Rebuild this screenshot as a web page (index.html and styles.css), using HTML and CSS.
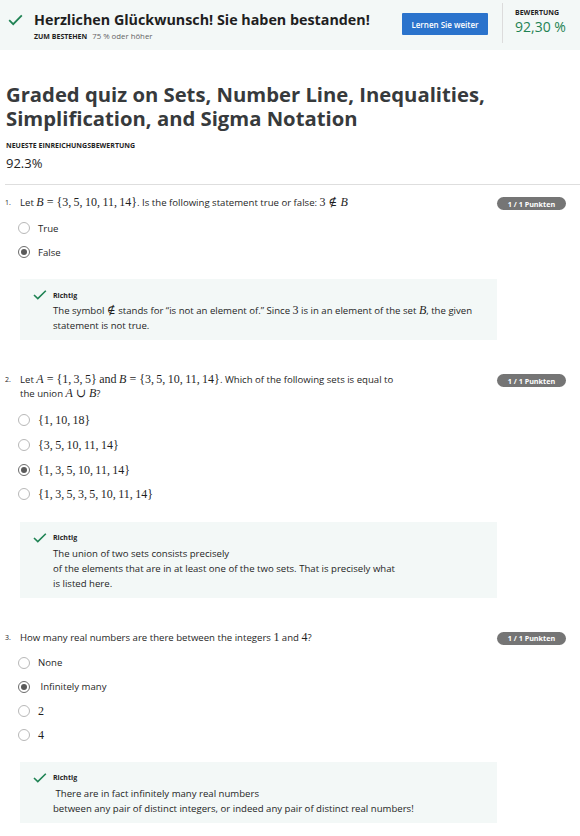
FILE: index.html
```html
<!DOCTYPE html>
<html lang="de">
<head>
<meta charset="utf-8">
<title>Graded quiz</title>
<link rel="stylesheet" href="styles.css">
</head>
<body>
<header class="banner">
  <div class="banner-left">
    <svg class="banner-check" width="15" height="12" viewBox="0 0 15 12"><path d="M1.2 6.2 L5.2 10.2 L13.8 1.4" fill="none" stroke="#1f8354" stroke-width="1.8"/></svg>
    <div class="banner-text">
      <div class="banner-title">Herzlichen Glückwunsch! Sie haben bestanden!</div>
      <div class="banner-sub"><span class="cap">ZUM BESTEHEN</span><span class="sub-val">75 % oder höher</span></div>
    </div>
  </div>
  <button class="btn">Lernen Sie weiter</button>
  <div class="banner-divider"></div>
  <div class="banner-grade">
    <div class="cap">BEWERTUNG</div>
    <div class="grade-val">92,30 %</div>
  </div>
</header>

<main class="main">
  <h1 class="title">Graded quiz on Sets, Number Line, Inequalities, Simplification, and Sigma Notation</h1>
  <div class="cap latest-label">NEUESTE EINREICHUNGSBEWERTUNG</div>
  <div class="latest-val">92.3%</div>
  <hr class="rule">

  <section class="q">
    <div class="q-num">1.</div>
    <div class="q-body">
      <div class="q-text">Let <span class="m"><i>B</i> = {3,&#8201;5,&#8201;10,&#8201;11,&#8201;14}</span>. Is the following statement true or false: <span class="m">3 ∉ <i>B</i></span></div>
      <ul class="opts">
        <li class="opt"><span class="radio"></span><span>True</span></li>
        <li class="opt"><span class="radio on"></span><span>False</span></li>
      </ul>
      <div class="fb">
        <div class="fb-head"><svg class="fb-check" width="14" height="10" viewBox="0 0 14 10"><path d="M1 5 L4.8 8.6 L12.8 0.8" fill="none" stroke="#1f8354" stroke-width="1.6"/></svg><span class="fb-label">Richtig</span></div>
        <div class="fb-text">The symbol <span class="m">∉</span> stands for “is not an element of.” Since <span class="m">3</span> is in an element of the set <span class="m"><i>B</i></span>, the given statement is not true.</div>
      </div>
    </div>
    <div class="badge">1 / 1 Punkten</div>
  </section>

  <section class="q">
    <div class="q-num">2.</div>
    <div class="q-body">
      <div class="q-text">Let <span class="m"><i>A</i> = {1,&#8201;3,&#8201;5}</span> <span class="m">and</span> <span class="m"><i>B</i> = {3,&#8201;5,&#8201;10,&#8201;11,&#8201;14}</span>. Which of the following sets is equal to the union <span class="m"><i>A</i> ∪ <i>B</i></span>?</div>
      <ul class="opts opts-math">
        <li class="opt"><span class="radio"></span><span class="m">{1,&#8201;10,&#8201;18}</span></li>
        <li class="opt"><span class="radio"></span><span class="m">{3,&#8201;5,&#8201;10,&#8201;11,&#8201;14}</span></li>
        <li class="opt"><span class="radio on"></span><span class="m">{1,&#8201;3,&#8201;5,&#8201;10,&#8201;11,&#8201;14}</span></li>
        <li class="opt"><span class="radio"></span><span class="m">{1,&#8201;3,&#8201;5,&#8201;3,&#8201;5,&#8201;10,&#8201;11,&#8201;14}</span></li>
      </ul>
      <div class="fb">
        <div class="fb-head"><svg class="fb-check" width="14" height="10" viewBox="0 0 14 10"><path d="M1 5 L4.8 8.6 L12.8 0.8" fill="none" stroke="#1f8354" stroke-width="1.6"/></svg><span class="fb-label">Richtig</span></div>
        <div class="fb-text">The union of two sets consists precisely<br>of the elements that are in at least one of the two sets. That is precisely what<br>is listed here.</div>
      </div>
    </div>
    <div class="badge">1 / 1 Punkten</div>
  </section>

  <section class="q">
    <div class="q-num">3.</div>
    <div class="q-body">
      <div class="q-text">How many real numbers are there between the integers <span class="m">1</span> and <span class="m">4</span>?</div>
      <ul class="opts">
        <li class="opt"><span class="radio"></span><span>None</span></li>
        <li class="opt"><span class="radio on"></span><span>&nbsp;Infinitely many</span></li>
        <li class="opt"><span class="radio"></span><span class="m">2</span></li>
        <li class="opt"><span class="radio"></span><span class="m">4</span></li>
      </ul>
      <div class="fb">
        <div class="fb-head"><svg class="fb-check" width="14" height="10" viewBox="0 0 14 10"><path d="M1 5 L4.8 8.6 L12.8 0.8" fill="none" stroke="#1f8354" stroke-width="1.6"/></svg><span class="fb-label">Richtig</span></div>
        <div class="fb-text">&nbsp;There are in fact infinitely many real numbers<br>between any pair of distinct integers, or indeed any pair of distinct real numbers!</div>
      </div>
    </div>
    <div class="badge">1 / 1 Punkten</div>
  </section>
</main>
</body>
</html>
```

FILE: styles.css
```css
* { box-sizing: border-box; }
html, body { margin: 0; padding: 0; }
body {
  font-family: "Open Sans", "Noto Sans", sans-serif;
  color: #1f1f1f;
  background: #ffffff;
  width: 580px;
}

.cap {
  font-size: 7px;
  font-weight: 700;
  color: #1f1f1f;
  text-transform: uppercase;
}

/* banner */
.banner {
  height: 50px;
  background: #f3f8f7;
  display: flex;
  align-items: flex-start;
}
.banner-left {
  display: flex;
  align-items: flex-start;
  padding: 13px 0 0 8px;
  width: 402px;
  flex: none;
}
.banner-check { margin-top: 1px; flex: none; }
.banner-text { margin-left: 11px; }
.banner-title {
  font-size: 14.3px;
  font-weight: 700;
  line-height: 14px;
  color: #1f1f1f;
  white-space: nowrap;
}
.banner-sub {
  margin-top: 5px;
  line-height: 9px;
  display: flex;
  gap: 5px;
  align-items: baseline;
}
.sub-val { font-size: 7.8px; color: #636363; }

.btn {
  margin-top: 13px;
  width: 86px;
  height: 22px;
  border: 0;
  border-radius: 1px;
  background: #2a73cc;
  color: #ffffff;
  font-family: "Open Sans", sans-serif;
  font-size: 8px;
  font-weight: 600;
  padding: 0;
  flex: none;
}
.banner-divider {
  margin: 3px 0 0 14px;
  width: 1px;
  height: 40px;
  background: #dcdcdc;
  flex: none;
}
.banner-grade {
  margin-left: 12px;
  padding-top: 9px;
}
.banner-grade .cap { line-height: 8px; }
.grade-val {
  font-size: 14px;
  line-height: 16px;
  color: #1f8354;
  margin-top: 2px;
}

/* main */
.main { padding: 0 0 20px 5px; }
.title {
  margin: 32px 0 0 1px;
  font-size: 20.25px;
  line-height: 24px;
  font-weight: 700;
  color: #373a3c;
  width: 530px;
}
.latest-label { margin: 12px 0 0 1px; line-height: 8px; }
.latest-val {
  margin: 5px 0 0 1px;
  font-size: 13px;
  line-height: 16px;
  color: #1f1f1f;
}
.rule {
  margin: 13px 0 0 0;
  border: 0;
  height: 1px;
  background: #dedede;
}

.q {
  display: grid;
  grid-template-columns: 15px 477px 69px;
  align-items: start;
  margin-top: 11px;
}
.q + .q { margin-top: 33px; }
.q-num {
  font-size: 7px;
  line-height: 14px;
  color: #1f1f1f;
}
.q-text {
  font-size: 9.6px;
  line-height: 14px;
  max-width: 380px;
}
.m {
  font-family: "Liberation Serif", "DejaVu Serif", serif;
  font-size: 12px;
  line-height: 10px;
}
.m i { font-style: italic; }

.opts {
  list-style: none;
  margin: 6px 0 0 0;
  padding: 0;
}
.opts-math { margin-top: 7px; }
.opt {
  height: 24px;
  display: flex;
  align-items: center;
  font-size: 9.6px;
}
.opts-math .opt { height: 24.7px; }
.radio {
  width: 12px;
  height: 12px;
  border: 1px solid #b8b8b8;
  border-radius: 50%;
  margin: 0 8px 0 -2px;
  flex: none;
  display: flex;
  align-items: center;
  justify-content: center;
}
.radio.on { border: 1.5px solid #6c6c6c; }
.radio.on::after {
  content: "";
  width: 6px;
  height: 6px;
  border-radius: 50%;
  background: #5a5a5a;
}

.fb {
  margin-top: 15px;
  background: #f3f8f7;
  padding: 10px 0 7px 33px;
}
.fb-head {
  height: 12px;
  display: flex;
  align-items: center;
  margin-left: -20px;
  margin-bottom: 2px;
}
.fb-check { flex: none; }
.fb-label {
  margin-left: 6px;
  font-size: 7px;
  font-weight: 700;
  color: #1f1f1f;
}
.fb-text {
  font-size: 9.6px;
  line-height: 15px;
  padding-right: 8px;
}

.badge {
  margin-top: 1px;
  height: 13px;
  width: 69px;
  border-radius: 7px;
  background: #757575;
  color: #ffffff;
  font-size: 7.2px;
  font-weight: 700;
  display: flex;
  align-items: center;
  justify-content: center;
}
```
